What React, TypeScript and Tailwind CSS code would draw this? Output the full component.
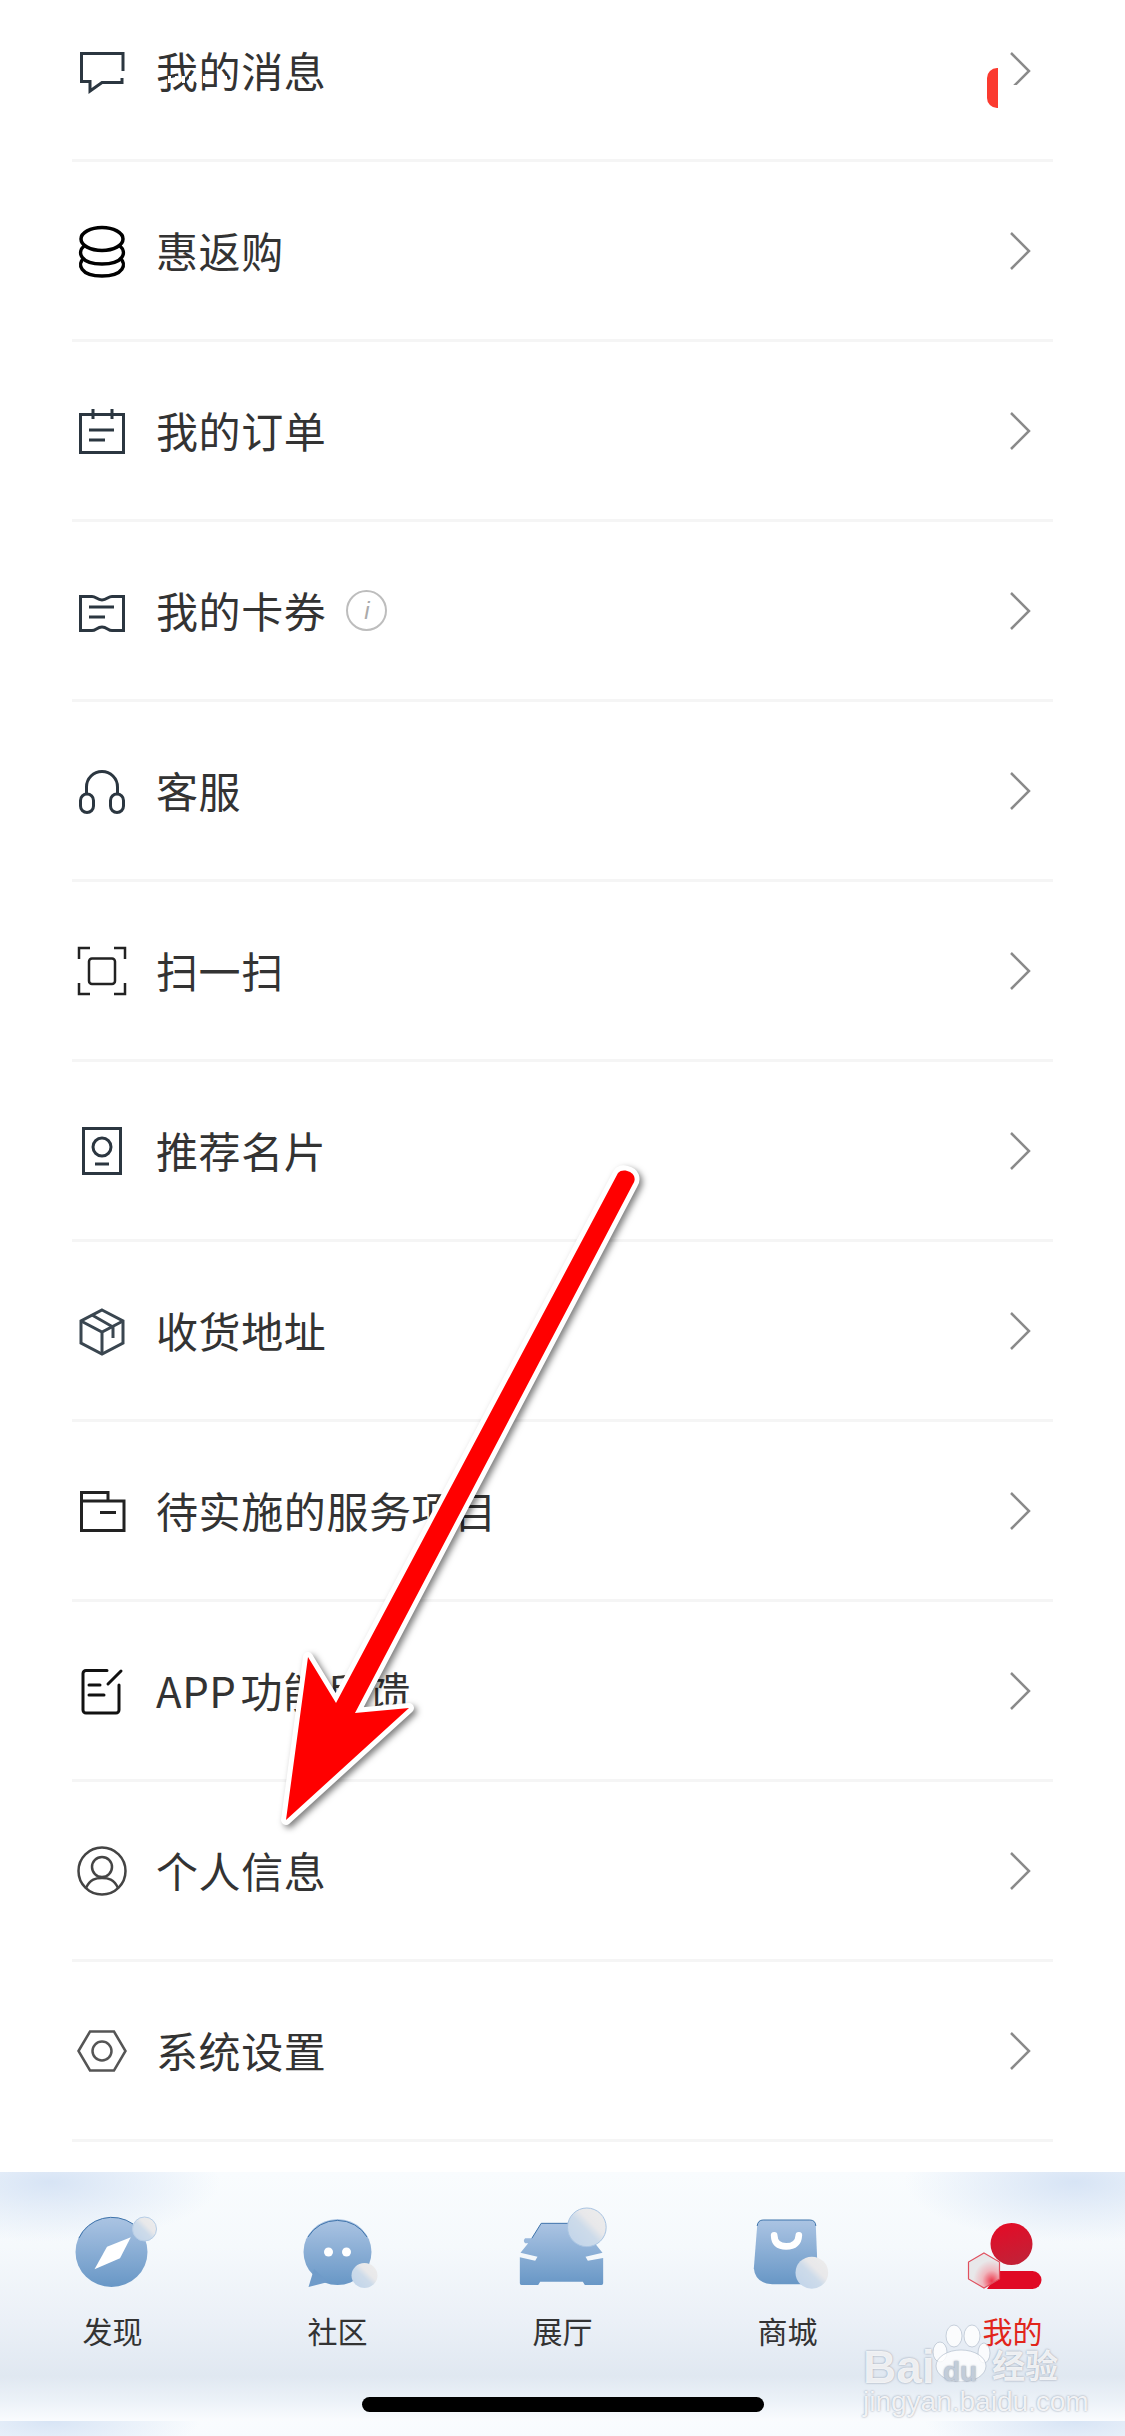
import React from 'react';

interface MenuItem {
  label: string;
  latin?: string;
  icon: React.ReactNode;
  info?: boolean;
  badge?: boolean;
}

const Glyph: React.FC<{ color?: string; width?: number; children: React.ReactNode }> = ({ color = '#2b3640', width = 3, children }) => (
  <svg width="60" height="60" viewBox="0 0 60 60" fill="none" stroke={color} strokeWidth={width} className="shrink-0">
    {children}
  </svg>
);

const menuItems: MenuItem[] = [
  {
    label: '我的消息',
    badge: true,
    icon: (
      <Glyph>
        <path d="M51 30V12.5H9.5V40.5H18V50L30 41.5H50V37" />
      </Glyph>
    ),
  },
  {
    label: '惠返购',
    icon: (
      <Glyph color="#000" width={3.5}>
        <ellipse cx="30" cy="18" rx="21" ry="11.5" />
        <path d="M12 25C5 31 8 43 30 43C52 43 55 31 48 25" />
        <path d="M12 37C5 43 8 55 30 55C52 55 55 43 48 37" />
      </Glyph>
    ),
  },
  {
    label: '我的订单',
    icon: (
      <Glyph>
        <path d="M8.5 13.5H51.5V51.5H8.5Z" />
        <path d="M21 8V18M40 8V18M17 29H42M17 39H33" />
      </Glyph>
    ),
  },
  {
    label: '我的卡券',
    info: true,
    icon: (
      <Glyph>
        <path d="M8.5 15.5H20C24 15.5 25 19 30 19C35 19 36 15.5 40 15.5H51.5V49.5H40C36 49.5 35 46 30 46C25 46 24 49.5 20 49.5H8.5Z" />
        <path d="M17 26H42M17 36H33" />
      </Glyph>
    ),
  },
  {
    label: '客服',
    icon: (
      <Glyph>
        <path d="M14.5 33V26A15.5 15.5 0 0 1 45.5 26V33" />
        <rect x="8.5" y="33" width="13" height="18.5" rx="6.5" />
        <rect x="38.5" y="33" width="13" height="18.5" rx="6.5" />
      </Glyph>
    ),
  },
  {
    label: '扫一扫',
    icon: (
      <Glyph color="#222" width={2.5}>
        <path d="M7 18V7H18M42 7H53V18M7 42V53H18M42 53H53V42" />
        <rect x="17" y="17.5" width="26" height="25.5" rx="3" />
      </Glyph>
    ),
  },
  {
    label: '推荐名片',
    icon: (
      <Glyph>
        <rect x="11.5" y="7.5" width="37" height="45" />
        <circle cx="30" cy="26" r="9" />
        <path d="M23 43H37" />
      </Glyph>
    ),
  },
  {
    label: '收货地址',
    icon: (
      <Glyph color="#3a4650">
        <path d="M30 9L51 20V42L30 53L9 42V20Z" />
        <path d="M9 20L30 31L51 20M30 31V53M20 14L41 26V37" />
      </Glyph>
    ),
  },
  {
    label: '待实施的服务项目',
    icon: (
      <Glyph color="#222">
        <path d="M9.5 20H52V49.5H9.5ZM9.5 20V11.5H36V20M28 31.5H44" />
      </Glyph>
    ),
  },
  {
    label: '功能反馈',
    latin: 'APP',
    icon: (
      <Glyph color="#111">
        <path d="M35 9.5H14A3 3 0 0 0 11 12.5V49A3 3 0 0 0 14 52H44A3 3 0 0 0 47 49V24" strokeLinecap="round" />
        <path d="M36 23L49 10M17 24H28M17 34H32" strokeLinecap="round" />
      </Glyph>
    ),
  },
  {
    label: '个人信息',
    icon: (
      <Glyph color="#444" width={2.5}>
        <circle cx="30" cy="30" r="23.5" />
        <circle cx="30" cy="26" r="10" />
        <path d="M14 47C18 38 24 37 30 37C36 37 42 38 46 47" />
      </Glyph>
    ),
  },
  {
    label: '系统设置',
    icon: (
      <Glyph color="#555" width={2.5}>
        <path d="M6.5 30L18 10.5H42L53.5 30L42 49.5H18Z" />
        <circle cx="30" cy="30" r="9.5" />
      </Glyph>
    ),
  },
];

const TabGradients: React.FC = () => (
  <svg width="0" height="0" className="absolute">
    <defs>
      <linearGradient id="tabBlue" x1="0" y1="0" x2="0" y2="1">
        <stop offset="0" stopColor="#abc4e3" />
        <stop offset="1" stopColor="#6897c6" />
      </linearGradient>
      <linearGradient id="tabBubble" x1="0.1" y1="0.9" x2="0.9" y2="0.1">
        <stop offset="0" stopColor="#c2d5ea" />
        <stop offset="0.45" stopColor="#cddbea" />
        <stop offset="0.65" stopColor="#e8e8ea" />
        <stop offset="1" stopColor="#ececec" />
      </linearGradient>
      <linearGradient id="tabRed" x1="0" y1="0" x2="0.3" y2="1">
        <stop offset="0" stopColor="#e60a25" />
        <stop offset="1" stopColor="#c42036" />
      </linearGradient>
      <radialGradient id="tabHex" cx="0.75" cy="0.8" r="0.6">
        <stop offset="0" stopColor="#ee3a4e" />
        <stop offset="0.5" stopColor="#f0b6bd" />
        <stop offset="1" stopColor="#e8e8ea" />
      </radialGradient>
    </defs>
  </svg>
);

const tabs: { label: string; active?: boolean; icon: React.ReactNode }[] = [
  {
    label: '发现',
    icon: (
      <svg width="120" height="90" viewBox="0 0 120 90">
        <ellipse cx="58.5" cy="47" rx="36" ry="35" fill="url(#tabBlue)" />
        <path d="M26 33A36 35 0 0 1 80 19" fill="none" stroke="#3f74ab" strokeWidth="1" />
        <path d="M77.8 32.3L54 41.7L41.5 64.3L67 53.3Z" fill="#fff" />
        <ellipse cx="91.5" cy="24" rx="12" ry="12" fill="url(#tabBubble)" stroke="#b6cde6" strokeWidth="1" />
      </svg>
    ),
  },
  {
    label: '社区',
    icon: (
      <svg width="120" height="90" viewBox="0 0 120 90">
        <ellipse cx="59.5" cy="47" rx="34" ry="33" fill="url(#tabBlue)" />
        <path d="M36 64L30.5 82L50 77Z" fill="#6f9bc9" />
        <path d="M30 32A34 33 0 0 1 89 32" fill="none" stroke="#3f74ab" strokeWidth="1" />
        <circle cx="50.5" cy="47" r="4.5" fill="#fff" />
        <circle cx="68.5" cy="47" r="4.5" fill="#fff" />
        <ellipse cx="86.5" cy="70.5" rx="13" ry="12.5" fill="url(#tabBubble)" />
      </svg>
    ),
  },
  {
    label: '展厅',
    icon: (
      <svg width="120" height="90" viewBox="7.5 15 360 270">
        <path
          d="M122 70H244L272 115H292Q300 122 292 130H283L306 158L255 170L262 182L308 174V250Q308 255 303 255H253L247 245H119L113 255H63Q58 255 58 250V172L104 182L111 170L60 158L83 130H74Q66 122 74 115H94Z"
          fill="url(#tabBlue)"
        />
        <path d="M94 115L122 70H210" fill="none" stroke="#3f74ab" strokeWidth="3" />
        <circle cx="259" cy="82" r="58" fill="url(#tabBubble)" stroke="#a9c4e2" strokeWidth="3" />
      </svg>
    ),
  },
  {
    label: '商城',
    icon: (
      <svg width="120" height="90" viewBox="682.5 15 360 270">
        <path d="M788 60H928Q945 60 946 78L953 253H815Q764 250 760 205L770 78Q772 60 788 60Z" fill="url(#tabBlue)" />
        <path d="M770 78Q772 60 788 60H928Q945 60 946 78" fill="none" stroke="#3f74ab" strokeWidth="3" />
        <path d="M821 106Q822 139 857 139Q893 139 895 106" fill="none" stroke="#fff" strokeWidth="20" strokeLinecap="round" />
        <ellipse cx="934" cy="218" rx="49" ry="48" fill="url(#tabBubble)" />
      </svg>
    ),
  },
  {
    label: '我的',
    active: true,
    icon: (
      <svg width="120" height="90" viewBox="0 0 120 90">
        <ellipse cx="58.5" cy="39" rx="21" ry="21" fill="url(#tabRed)" />
        <path d="M46 66H79.5A9 9 0 0 1 79.5 84H34Z" fill="#e00a25" />
        <path d="M31 48L46.5 57V74L31 83L15.5 74V57Z" fill="url(#tabHex)" stroke="#e0505f" strokeWidth="1.2" />
      </svg>
    ),
  },
];

// annotation arrow pasted on top of the screenshot
const RedArrow: React.FC = () => (
  <svg
    width="1125"
    height="2436"
    viewBox="0 0 1125 2436"
    className="absolute left-0 top-0 pointer-events-none drop-shadow-[3px_3px_3px_rgba(0,0,0,0.5)]"
  >
    <path
      d="M618 1173C622 1168 632 1171 634 1176C635 1179 635 1181 633 1184L355 1713L409 1708L286 1820L308 1657L336 1703Z"
      fill="#ff0000"
      stroke="#fff"
      strokeWidth="10"
      strokeLinejoin="round"
      paintOrder="stroke"
    />
  </svg>
);

const Watermark: React.FC = () => (
  <div className="absolute left-[860px] top-[150px] h-[100px] w-[210px] text-white/85 font-['Liberation_Sans',sans-serif] [text-shadow:0_0_2px_rgba(110,120,140,0.8)]">
    <svg width="210" height="60" viewBox="0 0 210 60" className="absolute left-0 top-0" fill="#ffffff" fillOpacity="0.8" stroke="#b4bfcd" strokeOpacity="0.7">
      <ellipse cx="94" cy="14" rx="8" ry="11" />
      <ellipse cx="112" cy="14" rx="8" ry="11" />
      <ellipse cx="80" cy="30" rx="7" ry="10" />
      <ellipse cx="124" cy="31" rx="6" ry="10" />
      <ellipse cx="101" cy="44" rx="25" ry="16" />
    </svg>
    <span className="absolute left-[3px] top-[20px] text-[46px] font-bold leading-[50px]">Bai</span>
    <span className="absolute left-[83px] top-[34px] text-[28px] font-bold leading-[32px] text-[#c2ccd9]">du</span>
    <span className="absolute left-[132px] top-[22px] font-['Noto_Sans_CJK_SC',sans-serif] text-[33px] font-bold leading-[40px] whitespace-nowrap">经验</span>
    <span className="absolute left-[3px] top-[64px] text-[28px] leading-[32px] whitespace-nowrap">jingyan.baidu.com</span>
  </div>
);

const App: React.FC = () => {
  return (
    <div className="relative flex h-[2436px] w-[1125px] flex-col overflow-hidden bg-white font-['Noto_Sans_CJK_SC','Noto_Sans',sans-serif]">
      <TabGradients />

      <div className="min-h-0 flex-1 -mt-[18px]">
        {menuItems.map((item) => (
          <div
            key={item.label}
            className="mx-[72px] flex h-[180px] items-center border-b-[3px] border-[#f5f5f5] pr-[22px]"
          >
            {item.icon}
            <span className="relative ml-[24px] pb-[2px] text-[42px] leading-[50px] tracking-[0.6px] text-[#333]">
              {item.latin && <span className="mr-[4px]">{item.latin}</span>}
              {item.label}
              {item.badge && (
                <span className="absolute left-[12px] top-[31px] h-[7px] w-[60px] bg-[repeating-linear-gradient(90deg,#fff_0px,#fff_3px,transparent_3px,transparent_7px)]" />
              )}
            </span>
            {item.info && (
              <span className="ml-[20px] flex h-[41px] w-[41px] items-center justify-center rounded-full border-2 border-[#bdbdbd] font-['Liberation_Sans',sans-serif] text-[24px] italic leading-none text-[#aaa]">
                i
              </span>
            )}
            <div className="relative ml-auto">
              {item.badge && (
                <span className="absolute -left-[22px] top-[17px] h-[40px] w-[11px] rounded-l-[10px] bg-[#fb3a2f]" />
              )}
              <svg width="22" height="40" viewBox="0 0 22 40" fill="none" stroke="#8a8a8a" strokeWidth="2.5" className="block">
                <path d="M2 2L20 20L2 38" />
              </svg>
              {item.badge && <span className="absolute left-0 top-[34px] h-[6px] w-[22px] bg-white" />}
            </div>
          </div>
        ))}
      </div>

      <div className="relative flex h-[264px] shrink-0 flex-col">
        <div className="flex h-[249px] bg-[radial-gradient(ellipse_170px_60px_at_50px_10px,#d7e4f5,transparent),radial-gradient(ellipse_170px_60px_at_1075px_10px,#d7e4f5,transparent),linear-gradient(180deg,#f9fcfe_0%,#f5f9fc_30%,#ebf0f7_60%,#e0e8f1_82%,#ecf2f8_92%,#fafcfe_100%)] pt-[33px]">
          {tabs.map((tab) => (
            <div key={tab.label} className="flex w-[225px] flex-col items-center">
              {tab.icon}
              <span className={`mt-[15px] text-[30px] leading-[40px] ${tab.active ? 'text-[#e1251b]' : 'text-[#333]'}`}>
                {tab.label}
              </span>
            </div>
          ))}
        </div>
        <div className="h-[15px] bg-[radial-gradient(ellipse_150px_40px_at_50px_0px,#d7e4f5,transparent),radial-gradient(ellipse_150px_40px_at_1075px_0px,#d7e4f5,transparent),linear-gradient(180deg,#f9fcfe,#f8fbfe)]" />
        <div className="absolute left-[362px] top-[225px] h-[15px] w-[402px] rounded-full bg-black" />
        <Watermark />
      </div>

      <RedArrow />
    </div>
  );
};

export default App;
